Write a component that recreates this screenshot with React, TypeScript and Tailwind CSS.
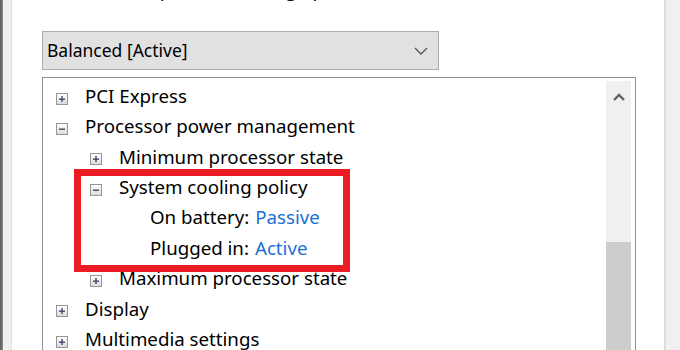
import React from "react";

type Row = {
  level: number;
  label: string;
  toggle?: "plus" | "minus";
  value?: string;
};

const rows: Row[] = [
  { level: 0, label: "PCI Express", toggle: "plus" },
  { level: 0, label: "Processor power management", toggle: "minus" },
  { level: 1, label: "Minimum processor state", toggle: "plus" },
  { level: 1, label: "System cooling policy", toggle: "minus" },
  { level: 2, label: "On battery:", value: "Passive" },
  { level: 2, label: "Plugged in:", value: "Active" },
  { level: 1, label: "Maximum processor state", toggle: "plus" },
  { level: 0, label: "Display", toggle: "plus" },
  { level: 0, label: "Multimedia settings", toggle: "plus" },
];

function ToggleBox({ kind }: { kind: "plus" | "minus" }) {
  return (
    <div className="shrink-0 w-[12px] h-[12px] border border-[#969696] bg-gradient-to-b from-white to-[#dcdcdc] flex items-center justify-center mt-[5px]">
      <svg width="8" height="8" viewBox="0 0 8 8">
        <rect x="1" y="3.5" width="6" height="1.4" fill="#3b4b6b" />
        {kind === "plus" && <rect x="3.3" y="1" width="1.4" height="6" fill="#3b4b6b" />}
      </svg>
    </div>
  );
}

export default function App() {
  const indents = ["pl-[10px]", "pl-[44px]", "pl-[104px]"];

  return (
    <div
      className="w-[680px] h-[350px] overflow-hidden flex bg-white text-black"
      style={{ fontFamily: '"Noto Sans", "Open Sans", sans-serif' }}
    >
      {/* left window edge */}
      <div className="w-[3px] shrink-0 bg-gradient-to-r from-[#5a5a5a] to-[#8a8a8a]" />
      <div className="w-[9px] shrink-0 bg-[#f0f0f0] border-r border-[#e2e2e2]" />

      {/* main */}
      <div className="flex-1 flex flex-col pl-[30px] relative">
        <div className="shrink-0 pl-[80px] text-[18.7px] leading-[22px] h-[22px] -mt-[21.5px] whitespace-nowrap">
          computer to manage power
        </div>

        <div className="shrink-0 mt-[30.5px] w-[397px] h-[39px] bg-[#e1e1e1] border border-[#adadad] flex items-center justify-between pl-[4px] pr-[10px]">
          <span className="text-[17.5px]">Balanced [Active]</span>
          <svg width="14" height="8" viewBox="0 0 14 8">
            <path d="M1 1 L7 7 L13 1" fill="none" stroke="#555" strokeWidth="1.4" />
          </svg>
        </div>

        <div className="shrink-0 mt-[7px] w-[594px] h-[280px] border border-[#8e929a] border-b-0 flex pt-[3px] pl-[3px] pr-[4px]">
          <div className="flex-1 flex flex-col">
            {rows.map((r, i) => (
              <div key={i} className={`shrink-0 h-[30.4px] flex items-center gap-[17px] ${indents[r.level]} whitespace-nowrap`}>
                {r.toggle && <ToggleBox kind={r.toggle} />}
                <span className="text-[18.7px] leading-none">
                  {r.label}
                  {r.value && <span className="text-[#1a6fd8] ml-[6px]">{r.value}</span>}
                </span>
              </div>
            ))}
          </div>

          {/* scrollbar */}
          <div className="w-[25px] shrink-0 bg-[#f0f0f0] flex flex-col">
            <div className="h-[31px] shrink-0 flex items-center justify-center">
              <svg width="12" height="8" viewBox="0 0 12 8">
                <path d="M1 7 L6 2 L11 7" fill="none" stroke="#606060" strokeWidth="2.4" />
              </svg>
            </div>
            <div className="h-[130px] shrink-0" />
            <div className="flex-1 bg-[#cdcdcd]" />
          </div>
        </div>

        {/* red highlight annotation */}
        <div className="absolute left-[62px] top-[169px] w-[276px] h-[103px] border-[7px] border-[#ec1c24]" />
      </div>

      {/* right window edge */}
      <div className="w-[16px] shrink-0 bg-[#f0f0f0] border-l-2 border-[#dcdcdc]" />
    </div>
  );
}
